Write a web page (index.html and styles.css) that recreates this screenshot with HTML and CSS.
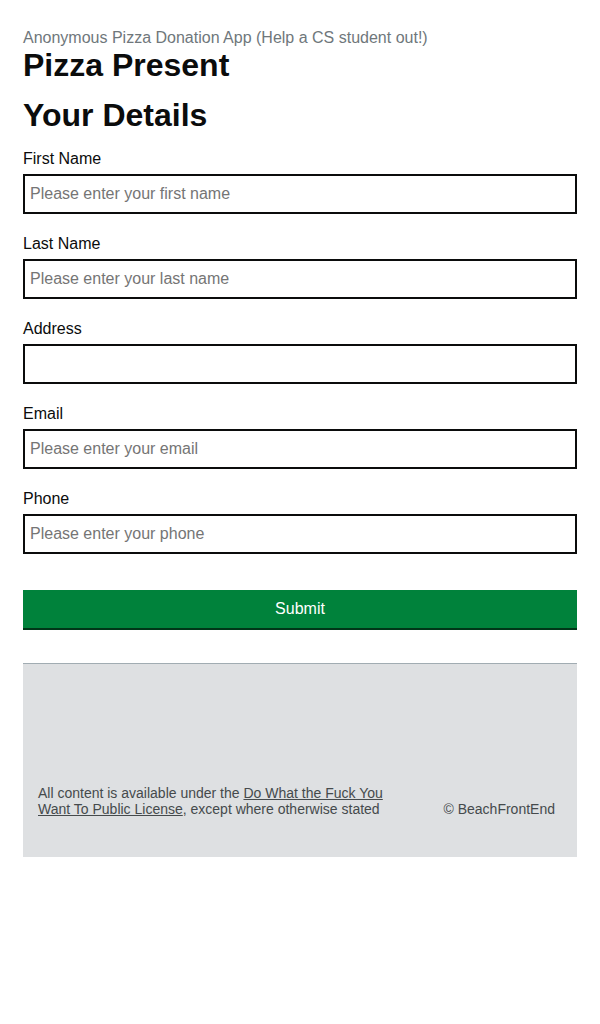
FILE: index.html
```html
<!DOCTYPE html>
<html lang="en">
<head>
<meta charset="utf-8">
<title>Pizza Present</title>
<link rel="stylesheet" href="styles.css">
</head>
<body>
<main class="page">
  <span class="caption">Anonymous Pizza Donation App (Help a CS student out!)</span>
  <h1 class="title">Pizza Present</h1>
  <h2 class="subtitle">Your Details</h2>
  <form class="form">
    <div class="group">
      <label class="label" for="first">First Name</label>
      <input class="input" id="first" type="text" placeholder="Please enter your first name">
    </div>
    <div class="group">
      <label class="label" for="last">Last Name</label>
      <input class="input" id="last" type="text" placeholder="Please enter your last name">
    </div>
    <div class="group">
      <label class="label" for="address">Address</label>
      <input class="input" id="address" type="text">
    </div>
    <div class="group">
      <label class="label" for="email">Email</label>
      <input class="input" id="email" type="text" placeholder="Please enter your email">
    </div>
    <div class="group">
      <label class="label" for="phone">Phone</label>
      <input class="input" id="phone" type="text" placeholder="Please enter your phone">
    </div>
    <button class="submit" type="button">Submit</button>
  </form>
  <footer class="footer">
    <div class="meta">
      <p class="licence">All content is available under the <a href="#">Do What the Fuck You Want To Public License</a>, except where otherwise stated</p>
      <p class="copyright">© BeachFrontEnd</p>
    </div>
  </footer>
</main>
</body>
</html>
```
FILE: styles.css
```css
html, body {
  margin: 0;
  padding: 0;
  background: #ffffff;
}
body {
  font-family: "Liberation Sans", Arial, sans-serif;
  color: #0b0c0c;
}
.page {
  padding: 28px 23px 0;
}
.caption {
  display: block;
  font-size: 16px;
  line-height: 20px;
  color: #6f777b;
}
.title {
  margin: 0;
  font-size: 32px;
  line-height: 35px;
  font-weight: 700;
}
.subtitle {
  margin: 15px 0 0;
  font-size: 32px;
  line-height: 35px;
  font-weight: 700;
}
.form {
  margin-top: 16px;
  display: flex;
  flex-direction: column;
}
.group {
  display: flex;
  flex-direction: column;
  margin-bottom: 20px;
}
.label {
  font-size: 16px;
  line-height: 20px;
  margin-bottom: 5px;
}
.input {
  box-sizing: border-box;
  height: 40px;
  width: 100%;
  margin: 0;
  padding: 5px;
  border: 2px solid #0b0c0c;
  border-radius: 0;
  font-family: inherit;
  font-size: 16px;
  color: #0b0c0c;
  background: #ffffff;
}
.input::placeholder {
  color: #757575;
  opacity: 1;
}
.submit {
  margin-top: 16px;
  height: 38px;
  width: 100%;
  border: 0;
  border-radius: 0;
  background: #00823b;
  box-shadow: 0 2px 0 #003618;
  color: #ffffff;
  font-family: inherit;
  font-size: 16px;
  line-height: 20px;
}
.footer {
  margin-top: 35px;
  border-top: 1px solid #a1acb2;
  background: #dee0e2;
  padding: 121px 22px 40px 15px;
  color: #454a4c;
  font-size: 14px;
  line-height: 16px;
}
.meta {
  display: flex;
  justify-content: space-between;
  align-items: flex-end;
}
.licence {
  margin: 0;
  max-width: 350px;
}
.licence a {
  color: #454a4c;
}
.copyright {
  margin: 0;
}
```
